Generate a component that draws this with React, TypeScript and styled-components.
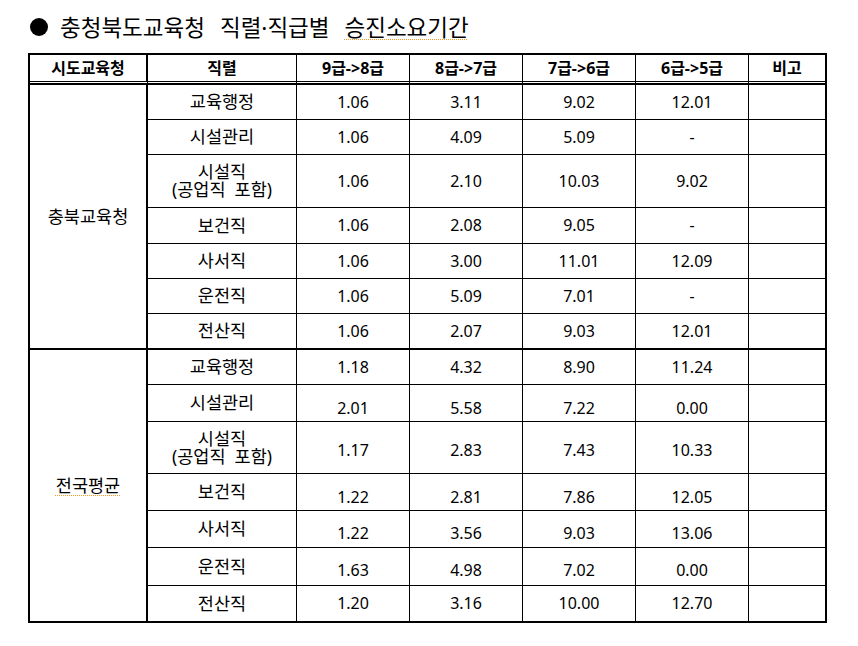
import React from "react";
import styled, { createGlobalStyle } from "styled-components";

const GlobalStyle = createGlobalStyle`
  html, body {
    margin: 0;
    padding: 0;
    background: #fff;
  }
  body {
    font-family: "Noto Sans", "Noto Sans CJK KR", sans-serif;
    color: #000;
  }
`;

const Page = styled.div`
  width: 858px;
  height: 646px;
  padding: 12px 0 0 28px;
  box-sizing: border-box;
`;

const TitleRow = styled.div`
  display: flex;
  align-items: center;
  height: 30px;
  margin-bottom: 11px;
`;

const Bullet = styled.span`
  width: 18px;
  height: 18px;
  margin-left: 2px;
  margin-right: 12px;
  border-radius: 50%;
  background: #000;
  flex: none;
`;

const TitleText = styled.h1`
  margin: 0;
  font-family: "Noto Sans CJK KR", sans-serif;
  font-size: 22.5px;
  font-weight: 400;
  line-height: 30px;
  word-spacing: 10px;
  white-space: nowrap;
`;

const Dot = styled.span`
  font-family: "Noto Sans", sans-serif;
`;

const Checked = styled.span`
  text-decoration: underline dotted #f39a26;
  text-decoration-thickness: 1px;
  text-underline-offset: 3px;
`;

const Table = styled.table`
  width: 799px;
  table-layout: fixed;
  border-collapse: separate;
  border-spacing: 0;
  border: 2px solid #000;
  font-size: 16px;
`;

const Col = styled.col<{ $w: number }>`
  width: ${(p) => p.$w}px;
`;

const HeadCell = styled.th<{ $strong?: boolean; $last?: boolean }>`
  height: 26px;
  padding: 0;
  font-weight: 700;
  line-height: 20px;
  text-align: center;
  vertical-align: middle;
  border-right: ${(p) => (p.$last ? 0 : p.$strong ? 2 : 1)}px solid #000;
  border-bottom: 3px double #000;
`;

const Row = styled.tr<{ $h: number }>`
  height: ${(p) => p.$h}px;
`;

const GroupCell = styled.td<{ $closed: boolean }>`
  padding: 0;
  text-align: center;
  vertical-align: middle;
  line-height: 20px;
  border-right: 2px solid #000;
  border-bottom: ${(p) => (p.$closed ? 2 : 0)}px solid #000;
`;

const Label = styled.span`
  font-size: 17.5px;
  line-height: 17px;
  white-space: pre;
`;

const Cell = styled.td<{
  $first: boolean;
  $end: number;
  $last?: boolean;
  $drop?: number;
}>`
  padding: ${(p) => (p.$drop ? p.$drop * 2 : 0)}px 0 0;
  text-align: center;
  vertical-align: middle;
  line-height: 17px;
  border-top: ${(p) => (p.$first ? 1 : 0)}px solid #000;
  border-right: ${(p) => (p.$last ? 0 : 1)}px solid #000;
  border-bottom: ${(p) => p.$end}px solid #000;
`;

type TRow = {
  job: string;
  values: string[];
  h: number;
  drop?: number;
};

type TGroup = {
  name: string;
  checked?: boolean;
  rows: TRow[];
};

const columns = [118, 149, 113, 113, 113, 113, 76];

const headers = ["시도교육청", "직렬", "9급->8급", "8급->7급", "7급->6급", "6급->5급", "비고"];

const groups: TGroup[] = [
  {
    name: "충북교육청",
    rows: [
      { job: "교육행정", values: ["1.06", "3.11", "9.02", "12.01"], h: 36 },
      { job: "시설관리", values: ["1.06", "4.09", "5.09", "-"], h: 35 },
      { job: "시설직\n(공업직  포함)", values: ["1.06", "2.10", "10.03", "9.02"], h: 53 },
      { job: "보건직", values: ["1.06", "2.08", "9.05", "-"], h: 36 },
      { job: "사서직", values: ["1.06", "3.00", "11.01", "12.09"], h: 35 },
      { job: "운전직", values: ["1.06", "5.09", "7.01", "-"], h: 35 },
      { job: "전산직", values: ["1.06", "2.07", "9.03", "12.01"], h: 36 },
    ],
  },
  {
    name: "전국평균",
    checked: true,
    rows: [
      { job: "교육행정", values: ["1.18", "4.32", "8.90", "11.24"], h: 35 },
      { job: "시설관리", values: ["2.01", "5.58", "7.22", "0.00"], h: 37, drop: 5 },
      { job: "시설직\n(공업직  포함)", values: ["1.17", "2.83", "7.43", "10.33"], h: 52, drop: 3 },
      { job: "보건직", values: ["1.22", "2.81", "7.86", "12.05"], h: 37, drop: 5 },
      { job: "사서직", values: ["1.22", "3.56", "9.03", "13.06"], h: 37, drop: 4 },
      { job: "운전직", values: ["1.63", "4.98", "7.02", "0.00"], h: 38, drop: 4 },
      { job: "전산직", values: ["1.20", "3.16", "10.00", "12.70"], h: 35 },
    ],
  },
];

export default function App() {
  return (
    <Page>
      <GlobalStyle />
      <TitleRow>
        <Bullet />
        <TitleText>
          충청북도교육청 직렬<Dot>·</Dot>직급별 <Checked>승진소요기간</Checked>
        </TitleText>
      </TitleRow>
      <Table>
        <colgroup>
          {columns.map((w, i) => (
            <Col key={i} $w={w} />
          ))}
        </colgroup>
        <thead>
          <tr>
            {headers.map((h, i) => (
              <HeadCell key={h} $strong={i === 0} $last={i === headers.length - 1}>
                {h}
              </HeadCell>
            ))}
          </tr>
        </thead>
        <tbody>
          {groups.map((g, gi) =>
            g.rows.map((r, ri) => {
              const first = gi === 0 && ri === 0;
              const closing = ri === g.rows.length - 1;
              const end = closing ? (gi === groups.length - 1 ? 0 : 2) : 1;
              return (
                <Row key={`${gi}-${ri}`} $h={r.h}>
                  {ri === 0 && (
                    <GroupCell
                      rowSpan={g.rows.length}
                      $closed={gi < groups.length - 1}
                      style={first ? { borderTop: "1px solid #000" } : undefined}
                    >
                      <Label>{g.checked ? <Checked>{g.name}</Checked> : g.name}</Label>
                    </GroupCell>
                  )}
                  <Cell $first={first} $end={end}>
                    <Label>{r.job}</Label>
                  </Cell>
                  {r.values.map((v, vi) => (
                    <Cell key={vi} $first={first} $end={end} $drop={r.drop}>
                      {v}
                    </Cell>
                  ))}
                  <Cell $first={first} $end={end} $last />
                </Row>
              );
            })
          )}
        </tbody>
      </Table>
    </Page>
  );
}
